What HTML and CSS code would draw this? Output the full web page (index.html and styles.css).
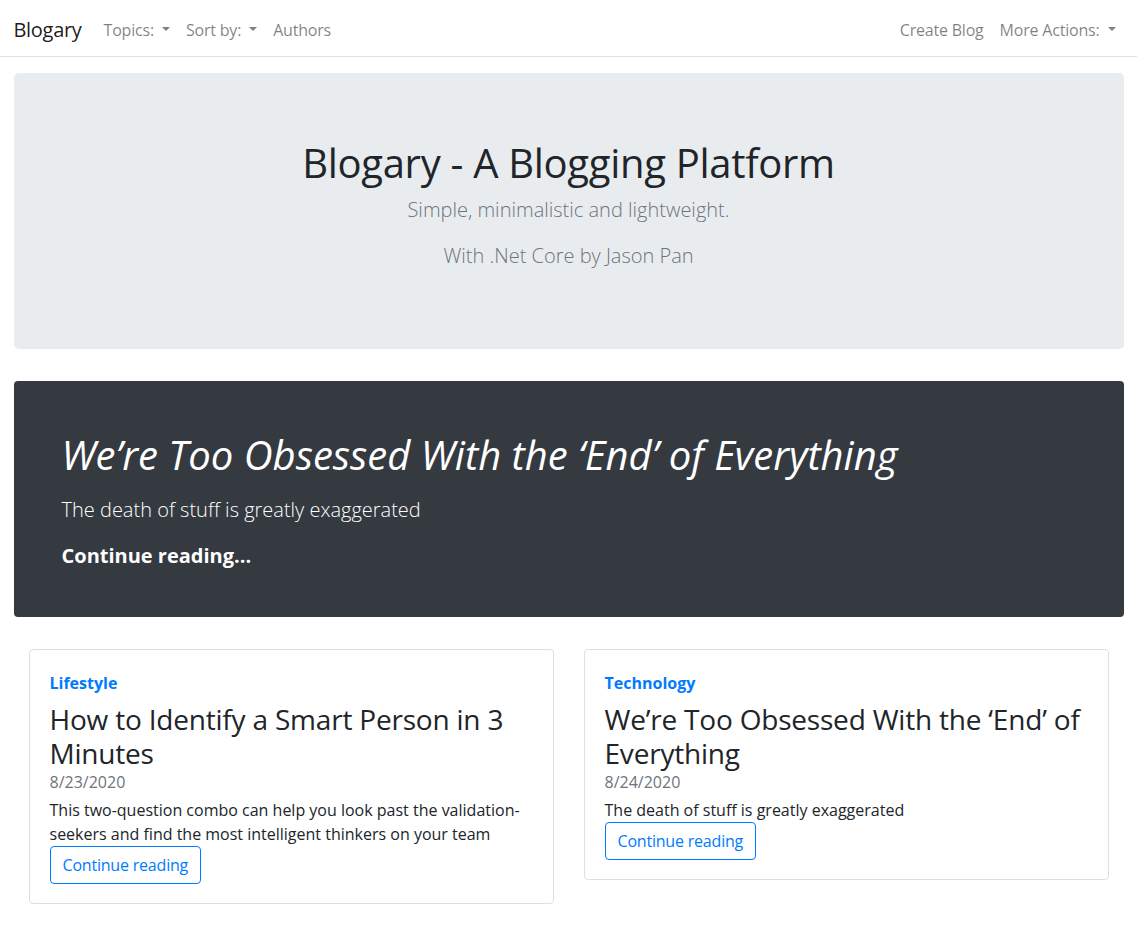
FILE: index.html
```html
<!DOCTYPE html>
<html lang="en">
<head>
<meta charset="utf-8">
<title>Blogary</title>
<link rel="stylesheet" href="styles.css">
</head>
<body>
<header class="navbar">
  <div class="nav-inner">
    <a class="brand" href="#">Blogary</a>
    <nav class="nav-group">
      <a class="nav-link dropdown" href="#">Topics:</a>
      <a class="nav-link dropdown" href="#">Sort by:</a>
      <a class="nav-link" href="#">Authors</a>
    </nav>
    <nav class="nav-group nav-right">
      <a class="nav-link" href="#">Create Blog</a>
      <a class="nav-link dropdown" href="#">More Actions:</a>
    </nav>
  </div>
</header>
<main class="container">
  <section class="hero">
    <h1 class="hero-title">Blogary - A Blogging Platform</h1>
    <p class="lead muted hero-sub">Simple, minimalistic and lightweight.</p>
    <p class="lead muted hero-sub">With .Net Core by Jason Pan</p>
  </section>
  <section class="featured">
    <h1 class="featured-title">We’re Too Obsessed With the ‘End’ of Everything</h1>
    <p class="lead featured-sub">The death of stuff is greatly exaggerated</p>
    <p class="lead featured-link"><a href="#">Continue reading...</a></p>
  </section>
  <section class="cards">
    <article class="card">
      <strong class="category">Lifestyle</strong>
      <h3 class="card-title">How to Identify a Smart Person in 3 Minutes</h3>
      <div class="date">8/23/2020</div>
      <p class="card-text">This two-question combo can help you look past the validation-seekers and find the most intelligent thinkers on your team</p>
      <a class="btn" href="#">Continue reading</a>
    </article>
    <article class="card">
      <strong class="category">Technology</strong>
      <h3 class="card-title">We’re Too Obsessed With the ‘End’ of Everything</h3>
      <div class="date">8/24/2020</div>
      <p class="card-text">The death of stuff is greatly exaggerated</p>
      <a class="btn" href="#">Continue reading</a>
    </article>
  </section>
</main>
</body>
</html>
```
FILE: styles.css
```css
* { box-sizing: border-box; }
html, body { margin: 0; padding: 0; }
body {
  font-family: "Open Sans", "Noto Sans", sans-serif;
  font-size: 16px;
  line-height: 1.5;
  color: #212529;
  background: #fff;
}
a { text-decoration: none; }
h1, h3, p { margin: 0; }

.navbar {
  height: 57px;
  border-bottom: 1px solid #dee2e6;
  background: #fff;
}
.nav-inner {
  max-width: 1110px;
  margin: 0 auto;
  height: 56px;
  padding-top: 3px;
  display: flex;
  align-items: center;
}
.brand {
  font-size: 20px;
  line-height: 30px;
  letter-spacing: -0.3px;
  color: rgba(0,0,0,.9);
  margin-right: 14px;
}
.nav-group { display: flex; }
.nav-right { margin-left: auto; }
.nav-link {
  padding: 8px;
  color: rgba(0,0,0,.5);
  line-height: 24px;
  letter-spacing: -0.2px;
}
.dropdown::after {
  content: "";
  display: inline-block;
  margin-left: 8px;
  vertical-align: .255em;
  border-top: .3em solid;
  border-right: .3em solid transparent;
  border-left: .3em solid transparent;
  border-bottom: 0;
}

.container {
  max-width: 1110px;
  margin: 0 auto;
  padding-top: 16px;
}
.hero {
  background: #e9ecef;
  border-radius: 4.8px;
  padding: 66px 32px 62px;
  text-align: center;
  margin-bottom: 32px;
}
.hero-title {
  font-size: 40px;
  font-weight: 400;
  line-height: 1.2;
  margin-bottom: 8px;
  letter-spacing: -0.3px;
}
.lead { font-size: 20px; font-weight: 300; line-height: 30px; }
.muted { color: #6c757d; }
.hero-sub { margin-bottom: 16px; }

.featured {
  background: #343a40;
  color: #fff;
  border-radius: 4px;
  padding: 50px 48px 46px;
  margin-bottom: 32px;
}
.featured-title {
  font-size: 40px;
  font-style: italic;
  font-weight: 400;
  line-height: 1.2;
}
.featured-sub { margin: 16px 0; }
.featured-link a { color: #fff; font-weight: 700; }

.cards {
  display: flex;
  align-items: flex-start;
  gap: 30px;
  padding: 0 15px;
}
.card {
  flex: 1 1 0;
  border: 1px solid rgba(0,0,0,.125);
  border-radius: 4px;
  padding: 21px 20px 19px;
  display: flex;
  flex-direction: column;
  align-items: flex-start;
}
.category {
  color: #007bff;
  font-weight: 700;
  margin-bottom: 8px;
}
.card-title {
  font-size: 28px;
  font-weight: 400;
  line-height: 1.2;
  letter-spacing: -0.2px;
}
.date { color: #6c757d; margin-bottom: 4px; }
.btn {
  display: inline-block;
  border: 1px solid #007bff;
  color: #007bff;
  border-radius: 4px;
  padding: 6px 12px;
  line-height: 24px;
  letter-spacing: -0.2px;
}
```
